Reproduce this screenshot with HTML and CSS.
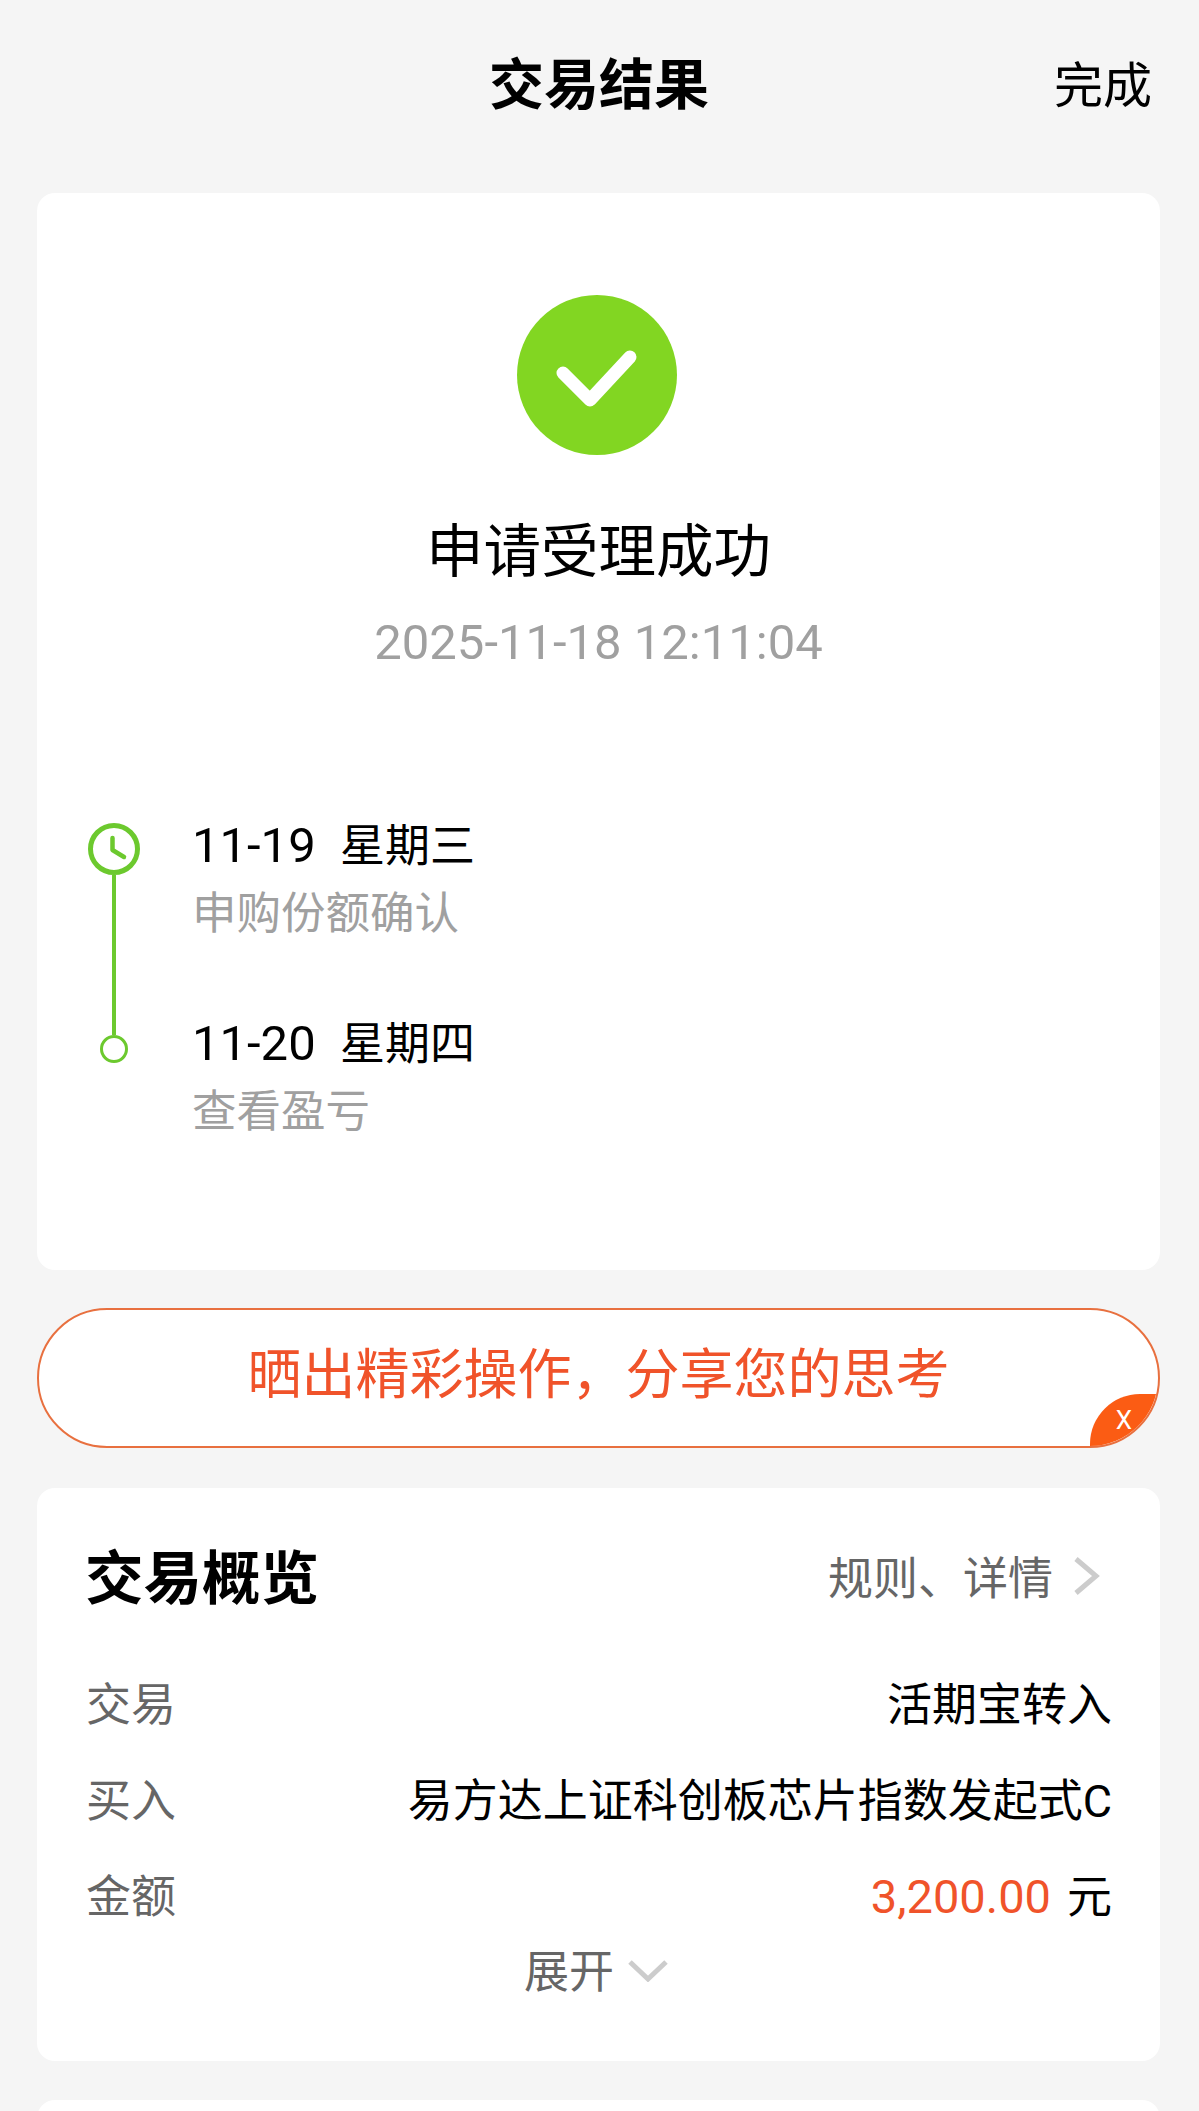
FILE: index.html
```html
<!DOCTYPE html>
<html lang="zh-CN">
<head>
    <meta charset="UTF-8">
    <meta name="viewport" content="width=device-width, initial-scale=1.0">
    <title>交易结果</title>
    <link rel="stylesheet" href="styles.css">
</head>
<body>
    <div class="page">
        <header class="topbar">
            <span></span>
            <h1>交易结果</h1>
            <a class="done">完成</a>
        </header>

        <section class="card result">
            <svg class="ok-icon" viewBox="0 0 160 160">
                <circle cx="80" cy="80" r="80" fill="#82d622"/>
                <path d="M46 78 L73 105 L113 62" fill="none" stroke="#fff" stroke-width="13" stroke-linecap="round" stroke-linejoin="round"/>
            </svg>
            <h2>申请受理成功</h2>
            <p class="time">2025-11-18 12:11:04</p>

            <div class="timeline">
                <div class="rail">
                    <svg class="clock" viewBox="0 0 52 52">
                        <circle cx="26" cy="26" r="23.5" fill="none" stroke="#6cc92e" stroke-width="5"/>
                        <path d="M24.5 15 V27 L36 34" fill="none" stroke="#6cc92e" stroke-width="4.5" stroke-linecap="round" stroke-linejoin="round"/>
                    </svg>
                    <div class="line"></div>
                    <div class="dot"></div>
                </div>
                <div class="steps">
                    <div class="step">
                        <p class="step-date"><span class="num">11-19&nbsp;&nbsp;</span>星期三</p>
                        <p class="step-desc">申购份额确认</p>
                    </div>
                    <div class="step">
                        <p class="step-date"><span class="num">11-20&nbsp;&nbsp;</span>星期四</p>
                        <p class="step-desc">查看盈亏</p>
                    </div>
                </div>
            </div>
        </section>

        <div class="share">
            <span class="share-text">晒出精彩操作&#xFF0C;分享您的思考</span>
            <span class="share-close">X</span>
        </div>

        <section class="card overview">
            <div class="overview-head">
                <h3>交易概览</h3>
                <a class="rules">规则、详情
                    <svg class="chevron-right" viewBox="0 0 28 40">
                        <path d="M4 3 L24 20 L4 37" fill="none" stroke="#cccccc" stroke-width="5"/>
                    </svg>
                </a>
            </div>
            <div class="row"><span class="label">交易</span><span>活期宝转入</span></div>
            <div class="row"><span class="label">买入</span><span>易方达上证科创板芯片指数发起式C</span></div>
            <div class="row"><span class="label">金额</span><span><em class="amount">3,200.00</em>元</span></div>
            <div class="expand">展开
                <svg class="chevron-down" viewBox="0 0 40 22">
                    <path d="M2 2 L20 19 L38 2" fill="none" stroke="#cccccc" stroke-width="5"/>
                </svg>
            </div>
        </section>

        <section class="card next"></section>
    </div>
</body>
</html>
```

FILE: styles.css
```css
* {
    box-sizing: border-box;
    margin: 0;
    padding: 0;
}

html, body {
    height: 100%;
    overflow: hidden;
}

body {
    background-color: #f5f5f5;
    color: #000;
    font-family: 'Roboto', 'Noto Sans CJK SC', sans-serif;
}

.page {
    padding: 0 39px 0 37px;
}

.topbar {
    display: grid;
    grid-template-columns: 1fr auto 1fr;
    align-items: center;
    height: 193px;
    padding-bottom: 24px;
}

.topbar h1 {
    font-size: 55px;
    font-weight: 700;
    line-height: 70px;
    padding-left: 1px;
}

.done {
    font-size: 49px;
    line-height: 70px;
    text-align: right;
    padding: 5px 8px 0 0;
}

.card {
    background-color: #fff;
    border-radius: 18px;
}

.result {
    height: 1077px;
    padding-top: 102px;
    text-align: center;
}

.ok-icon {
    display: block;
    width: 160px;
    height: 160px;
    margin-left: 480px;
}

.result h2 {
    margin-top: 62px;
    font-size: 57.5px;
    font-weight: 400;
    line-height: 72px;
}

.time {
    margin-top: 24px;
    font-size: 49px;
    line-height: 60px;
    color: #a0a0a0;
}

.timeline {
    display: flex;
    margin-top: 140px;
    padding-left: 51px;
    text-align: left;
}

.rail {
    display: flex;
    flex-direction: column;
    align-items: center;
    width: 52px;
    margin: 10px 52px 0 0;
}

.clock {
    display: block;
    width: 52px;
    height: 52px;
    flex: none;
}

.line {
    width: 3.5px;
    height: 160px;
    background-color: #6cc92e;
}

.dot {
    width: 28px;
    height: 28px;
    border: 3.5px solid #6cc92e;
    border-radius: 50%;
}

.step {
    margin-bottom: 63px;
}

.step:last-child {
    margin-bottom: 0;
}

.step-date {
    font-size: 45px;
    line-height: 66px;
}

.num {
    font-size: 49px;
}

.step-desc {
    font-size: 44.5px;
    line-height: 68px;
    color: #a0a0a0;
}

.share {
    position: relative;
    display: flex;
    align-items: center;
    justify-content: center;
    height: 140px;
    margin-top: 38px;
    background-color: #fff;
    border: 2px solid #e8703f;
    border-radius: 70px;
    overflow: hidden;
    font-size: 54px;
    color: #f0532a;
}

.share-text {
    padding-bottom: 16px;
}

.share-close {
    position: absolute;
    right: 0;
    bottom: 0;
    width: 68px;
    height: 52px;
    background-color: #fb5c14;
    border-top-left-radius: 50px;
    color: #fff;
    font-size: 26px;
    line-height: 52px;
    text-align: center;
}

.overview {
    height: 573px;
    margin-top: 40px;
    padding: 45px 48px 0 49px;
}

.overview-head {
    display: flex;
    align-items: center;
    justify-content: space-between;
    height: 80px;
    margin-bottom: 40px;
}

.overview-head h3 {
    font-size: 58.5px;
    font-weight: 700;
    margin-left: -1px;
}

.rules {
    display: flex;
    align-items: center;
    font-size: 45px;
    color: #666;
    padding-top: 5px;
}

.chevron-right {
    width: 28px;
    height: 40px;
    margin: 1px 12px 0 19px;
}

.row {
    display: flex;
    align-items: center;
    justify-content: space-between;
    height: 96px;
    font-size: 45px;
}

.label {
    color: #666;
}

.amount {
    font-style: normal;
    font-size: 47px;
    color: #f0532a;
    margin-right: 16px;
}

.expand {
    display: flex;
    align-items: center;
    justify-content: center;
    height: 60px;
    margin-top: -3px;
    padding-right: 6px;
    font-size: 45px;
    color: #666;
}

.chevron-down {
    width: 40px;
    height: 22px;
    margin-left: 14px;
    margin-top: 6px;
}

.next {
    height: 60px;
    margin-top: 39px;
}
```
